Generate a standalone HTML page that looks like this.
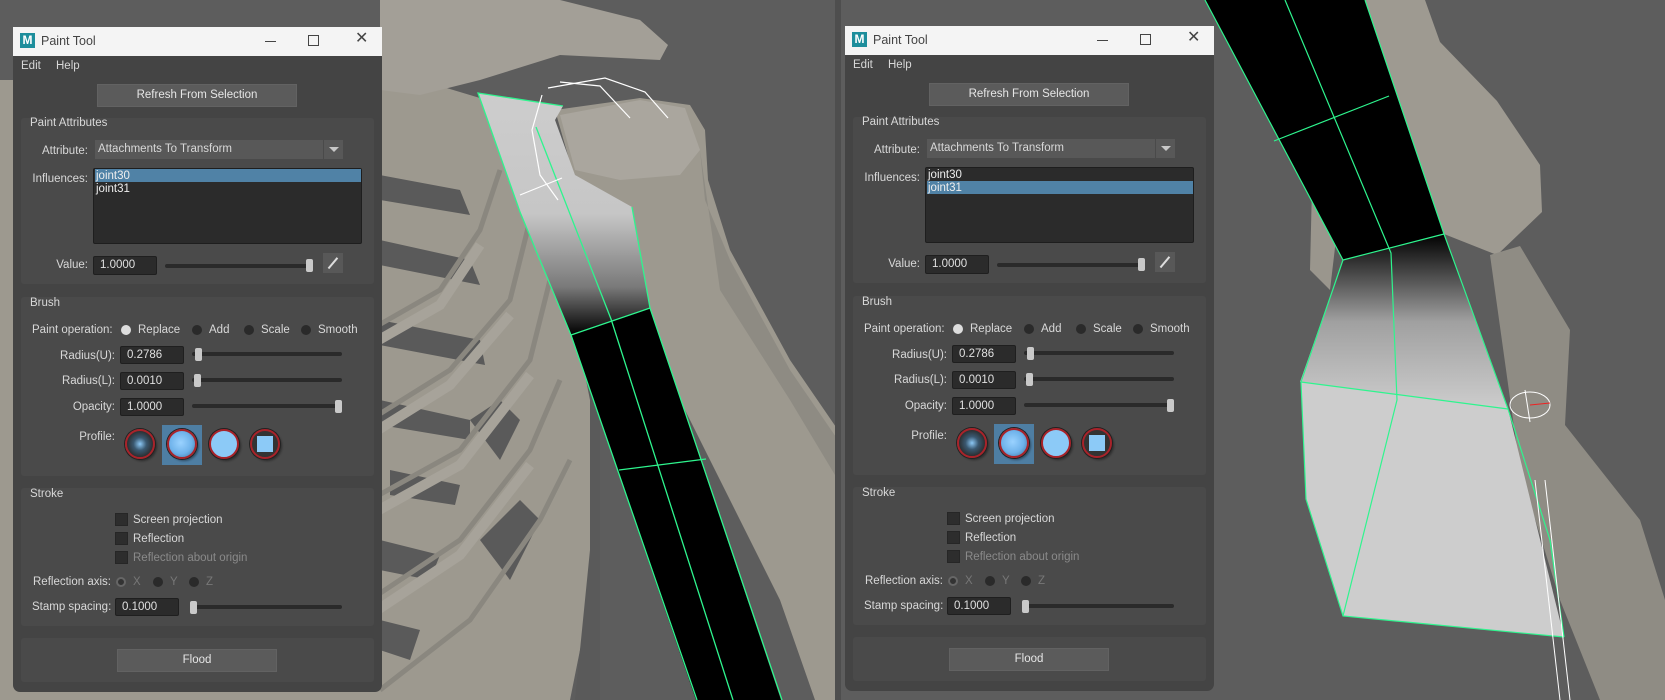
<!DOCTYPE html>
<html><head><meta charset="utf-8"><style>
*{margin:0;padding:0;box-sizing:border-box}
body{width:1665px;height:700px;overflow:hidden;background:#5c5c5c;position:relative;font-family:"Liberation Sans",sans-serif;font-size:11.5px;color:#d8d8d8}
.a{position:absolute}
.p{position:absolute;width:0;height:0}
.win{left:13px;top:27px;width:369px;height:665px;background:#444;border-radius:0 0 7px 7px}
.tb{left:13px;top:27px;width:369px;height:29px;background:#f4f4f4;color:#333;font-size:12.5px}
.sec{left:21px;width:353px;background:#4a4a4a;border-radius:3px}
.lbl{white-space:nowrap;line-height:14px}
.r{text-align:right}
.btn{background:#5b5b5b;border:1px solid #626262;color:#e6e6e6;text-align:center}
.fld{background:#2b2b2b;border:1px solid #1f1f1f;border-radius:2px;color:#e0e0e0;padding-left:6px;line-height:16px}
.trk{height:4px;background:#2a2a2a;border-radius:2px}
.hdl{width:7px;height:13px;background:#c9c9c9;border-radius:2px}
.rad{width:10px;height:10px;border-radius:50%;background:#2a2a2a}
.cb{width:13px;height:13px;background:#2d2d2d;border:1px solid #262626}
.prof{width:30px;height:30px;border-radius:50%;border:2px solid #a8232a;box-shadow:0 0 0 1px #222,2px 2px 2px rgba(0,0,0,.4)}
</style></head><body>
<svg class="a" style="left:0;top:0" width="1665" height="700">
<defs><linearGradient id="g1" x1="0" y1="0" x2="0" y2="1"><stop offset="0" stop-color="#cdcdcd"/><stop offset=".5" stop-color="#c6c6c6"/><stop offset=".8" stop-color="#7a7a7a"/><stop offset="1" stop-color="#000"/></linearGradient>
<linearGradient id="g2" x1="0" y1="0" x2="0" y2="1"><stop offset="0" stop-color="#000"/><stop offset=".5" stop-color="#a0a0a0"/><stop offset="1" stop-color="#cdcdcd"/></linearGradient></defs>
<!-- left viewport -->
<rect x="0" y="0" width="838" height="700" fill="#5d5d5d"/>
<polygon points="0,80 420,80 520,110 560,160 590,300 600,450 590,600 570,700 0,700" fill="#9d998f"/>
<g fill="#5a5a5a">
<polygon points="380,175 460,190 470,215 380,200"/>
<polygon points="380,240 470,260 480,285 380,265"/>
<polygon points="380,320 480,340 485,365 380,345"/>
<polygon points="380,400 470,420 470,440 380,425"/>
<polygon points="390,470 460,485 455,505 390,495"/>
<polygon points="380,540 440,555 430,580 380,570"/>
<polygon points="380,620 420,630 410,660 380,650"/>
<polygon points="470,420 500,400 520,420 500,460"/>
<polygon points="480,540 520,500 540,520 510,580"/>
<polygon points="560,250 600,250 600,700 575,700 590,550 590,400"/>
</g>
<g stroke="#8a877f" stroke-width="5" fill="none">
<polyline points="370,330 440,290 480,230 500,170"/>
<polyline points="370,420 450,370 510,300 530,220"/>
<polyline points="370,500 460,450 530,360 550,280"/>
<polyline points="370,600 460,540 530,450 560,380"/>
<polyline points="380,690 470,620 540,520 570,460"/>
</g>
<g stroke="#a7a39a" stroke-width="10" fill="none">
<polyline points="370,345 440,305 480,245"/>
<polyline points="370,435 450,385 510,315"/>
<polyline points="370,515 460,465 530,375"/>
<polyline points="370,615 460,555 530,465"/>
</g>
<polygon points="380,0 560,0 640,20 668,45 660,60 560,55 480,80 420,95 380,90" fill="#a39f97"/>
<polygon points="555,110 640,98 690,105 705,130 708,180 730,250 790,360 838,430 838,700 815,700 780,600 730,500 680,400 640,320 600,250 575,180" fill="#9d998f"/>
<polygon points="560,115 640,100 685,108 700,150 680,175 620,180 575,170" fill="#aaa69e"/>
<polygon points="700,150 705,200 730,260 790,370 838,440 838,480 790,400 720,290" fill="#8e8b83"/>
<polygon points="478,93 563,106 555,120 575,175 632,207 650,308 571,335 520,212" fill="url(#g1)"/>
<polygon points="571,335 650,308 781,700 696,700" fill="#000"/>
<g stroke="#2ef58e" stroke-width="1.3" fill="none">
<polyline points="563,106 478,93 520,212 571,335 697,700"/>
<polyline points="632,207 650,308 782,700"/>
<line x1="571" y1="335" x2="650" y2="308"/><line x1="619" y1="470" x2="706" y2="459"/>
<polyline points="536,127 611,319 733,700"/>
</g>
<g stroke="#fff" stroke-width="1.2" fill="none">
<polyline points="548,88 605,78 645,92 668,118"/><polyline points="560,82 600,86 630,118"/><polyline points="542,95 532,130 540,175 558,200"/><line x1="520" y1="195" x2="562" y2="178"/>
</g>
<rect x="835" y="0" width="6" height="700" fill="#4e4e4e"/>
<!-- right viewport -->
<rect x="841" y="0" width="824" height="700" fill="#5d5d5d"/>
<polygon points="1365,0 1425,0 1440,42 1497,101 1540,165 1542,212 1497,255 1444,234" fill="#9e9a91"/>
<polygon points="1490,255 1520,246 1570,330 1565,425 1640,520 1665,600 1665,700 1600,700 1560,600 1520,470" fill="#8f8c84"/>
<polygon points="1312,186 1343,180 1330,290 1310,270" fill="#9a968d"/>
<polygon points="1205,0 1365,0 1444,234 1343,260" fill="#000"/>
<polygon points="1343,260 1444,234 1508,409 1300,382" fill="url(#g2)"/>
<polygon points="1301,382 1508,409 1564,637 1343,616 1306,499" fill="#cdcdcd"/>
<g stroke="#2ef58e" stroke-width="1.2" fill="none">
<polyline points="1205,0 1343,260 1301,382 1306,499 1343,616 1564,637"/>
<polyline points="1365,0 1444,234 1508,409 1550,540 1564,637"/>
<polyline points="1285,0 1391,253 1397,400 1343,616"/>
<polyline points="1274,141 1389,96"/>
<line x1="1343" y1="260" x2="1444" y2="234"/><line x1="1301" y1="382" x2="1508" y2="409"/>
</g>
<g stroke="#fff" stroke-width="1" fill="none"><ellipse cx="1530" cy="405" rx="20" ry="13"/><line x1="1525" y1="390" x2="1530" y2="422"/><line x1="1535" y1="480" x2="1560" y2="700"/><line x1="1545" y1="480" x2="1570" y2="700"/></g>
<line x1="1530" y1="405" x2="1550" y2="403" stroke="#e22" stroke-width="1"/>
</svg>

<div class="p" style="left:0;top:0">
<div class="a win"></div>
<div class="a tb"></div>
<div class="a" style="left:20px;top:33px;width:15px;height:15px;background:#1d8e9c;color:#fff;font-weight:bold;font-size:12px;text-align:center;line-height:15px">M</div>
<div class="a lbl" style="left:41px;top:34px;color:#444;font-size:12.5px">Paint Tool</div>
<div class="a" style="left:265px;top:41px;width:11px;height:1px;background:#444"></div>
<div class="a" style="left:308px;top:35px;width:11px;height:11px;border:1px solid #444"></div>
<div class="a lbl" style="left:355px;top:32px;color:#444;font-size:16px">✕</div>
<div class="a lbl" style="left:21px;top:59px">Edit</div>
<div class="a lbl" style="left:56px;top:59px">Help</div>
<div class="a btn" style="left:97px;top:84px;width:200px;height:23px;line-height:21px">Refresh From Selection</div>
<div class="a sec" style="top:118px;height:166px"></div>
<div class="a lbl" style="left:30px;top:116px">Paint Attributes</div>
<div class="a lbl r" style="left:20px;width:68px;top:144px">Attribute:</div>
<div class="a" style="left:95px;top:140px;width:248px;height:19px;background:#585858;padding-left:3px;line-height:19px">Attachments To Transform</div>
<div class="a" style="left:323px;top:140px;width:1px;height:19px;background:#4a4a4a"></div>
<div class="a" style="left:329px;top:147px;width:0;height:0;border-left:5px solid transparent;border-right:5px solid transparent;border-top:5px solid #c8c8c8"></div>
<div class="a lbl r" style="left:20px;width:68px;top:172px">Influences:</div>
<div class="a" style="left:93px;top:168px;width:269px;height:76px;background:#2b2b2b;border:1px solid #1e1e1e;border-radius:2px"></div>
<div class="a" style="left:95px;top:169px;width:266px;height:13px;background:#5082a6"></div>
<div class="a lbl" style="left:96px;top:169px;color:#eee">joint30</div>
<div class="a lbl" style="left:96px;top:182px;color:#eee">joint31</div>
<div class="a lbl r" style="left:20px;width:68px;top:258px">Value:</div>
<div class="a fld" style="left:93px;top:256px;width:64px;height:19px">1.0000</div>
<div class="a trk" style="left:165px;top:264px;width:148px"></div>
<div class="a hdl" style="left:306px;top:259px"></div>
<div class="a" style="left:323px;top:253px;width:20px;height:20px;background:#585858"></div>
<div class="a" style="left:332px;top:256px;width:1.5px;height:14px;background:#ddd;transform:rotate(40deg)"></div>
<div class="a sec" style="top:297px;height:179px"></div>
<div class="a lbl" style="left:30px;top:296px">Brush</div>
<div class="a lbl" style="left:32px;top:323px">Paint operation:</div>
<div class="a rad" style="left:121px;top:325px;background:#ddd"></div>
<div class="a lbl" style="left:138px;top:323px">Replace</div>
<div class="a rad" style="left:192px;top:325px"></div>
<div class="a lbl" style="left:209px;top:323px">Add</div>
<div class="a rad" style="left:244px;top:325px"></div>
<div class="a lbl" style="left:261px;top:323px">Scale</div>
<div class="a rad" style="left:301px;top:325px"></div>
<div class="a lbl" style="left:318px;top:323px">Smooth</div>
<div class="a lbl r" style="left:30px;width:85px;top:349px">Radius(U):</div>
<div class="a fld" style="left:120px;top:346px;width:64px;height:18px">0.2786</div>
<div class="a trk" style="left:192px;top:352px;width:150px"></div>
<div class="a hdl" style="left:195px;top:348px"></div>
<div class="a lbl r" style="left:30px;width:85px;top:374px">Radius(L):</div>
<div class="a fld" style="left:120px;top:372px;width:64px;height:18px">0.0010</div>
<div class="a trk" style="left:192px;top:378px;width:150px"></div>
<div class="a hdl" style="left:194px;top:374px"></div>
<div class="a lbl r" style="left:30px;width:85px;top:400px">Opacity:</div>
<div class="a fld" style="left:120px;top:398px;width:64px;height:18px">1.0000</div>
<div class="a trk" style="left:192px;top:404px;width:150px"></div>
<div class="a hdl" style="left:335px;top:400px"></div>
<div class="a lbl r" style="left:30px;width:85px;top:430px">Profile:</div>
<div class="a" style="left:162px;top:425px;width:40px;height:40px;background:#4e7ea3"></div>
<div class="a prof" style="left:125px;top:429px;background:radial-gradient(circle,#8cc8f5 0,#3a5870 35%,#2a2a2a 75%)"></div>
<div class="a prof" style="left:167px;top:429px;background:radial-gradient(circle at 45% 45%,#9ad2ff 0,#6eb2ea 55%,#3a6c96 100%)"></div>
<div class="a prof" style="left:209px;top:429px;background:#8ccaf7"></div>
<div class="a prof" style="left:250px;top:429px;background:#333"></div>
<div class="a" style="left:257px;top:436px;width:16px;height:16px;background:#8ccaf7"></div>
<div class="a sec" style="top:488px;height:138px"></div>
<div class="a lbl" style="left:30px;top:487px">Stroke</div>
<div class="a cb" style="left:115px;top:513px"></div>
<div class="a lbl" style="left:133px;top:513px">Screen projection</div>
<div class="a cb" style="left:115px;top:532px"></div>
<div class="a lbl" style="left:133px;top:532px">Reflection</div>
<div class="a cb" style="left:115px;top:551px"></div>
<div class="a lbl" style="left:133px;top:551px;color:#8a8a8a">Reflection about origin</div>
<div class="a lbl" style="left:33px;top:575px">Reflection axis:</div>
<div class="a rad" style="left:116px;top:577px;border:2px solid #666;background:#333"></div>
<div class="a lbl" style="left:133px;top:575px;color:#777">X</div>
<div class="a rad" style="left:153px;top:577px"></div>
<div class="a lbl" style="left:170px;top:575px;color:#777">Y</div>
<div class="a rad" style="left:189px;top:577px"></div>
<div class="a lbl" style="left:206px;top:575px;color:#777">Z</div>
<div class="a lbl" style="left:32px;top:600px">Stamp spacing:</div>
<div class="a fld" style="left:115px;top:598px;width:64px;height:18px">0.1000</div>
<div class="a trk" style="left:193px;top:605px;width:149px"></div>
<div class="a hdl" style="left:190px;top:601px"></div>
<div class="a sec" style="top:638px;height:44px"></div>
<div class="a btn" style="left:117px;top:649px;width:160px;height:23px;line-height:21px">Flood</div>
</div>

<div class="p" style="left:832px;top:-1px">
<div class="a win"></div>
<div class="a tb"></div>
<div class="a" style="left:20px;top:33px;width:15px;height:15px;background:#1d8e9c;color:#fff;font-weight:bold;font-size:12px;text-align:center;line-height:15px">M</div>
<div class="a lbl" style="left:41px;top:34px;color:#444;font-size:12.5px">Paint Tool</div>
<div class="a" style="left:265px;top:41px;width:11px;height:1px;background:#444"></div>
<div class="a" style="left:308px;top:35px;width:11px;height:11px;border:1px solid #444"></div>
<div class="a lbl" style="left:355px;top:32px;color:#444;font-size:16px">✕</div>
<div class="a lbl" style="left:21px;top:59px">Edit</div>
<div class="a lbl" style="left:56px;top:59px">Help</div>
<div class="a btn" style="left:97px;top:84px;width:200px;height:23px;line-height:21px">Refresh From Selection</div>
<div class="a sec" style="top:118px;height:166px"></div>
<div class="a lbl" style="left:30px;top:116px">Paint Attributes</div>
<div class="a lbl r" style="left:20px;width:68px;top:144px">Attribute:</div>
<div class="a" style="left:95px;top:140px;width:248px;height:19px;background:#585858;padding-left:3px;line-height:19px">Attachments To Transform</div>
<div class="a" style="left:323px;top:140px;width:1px;height:19px;background:#4a4a4a"></div>
<div class="a" style="left:329px;top:147px;width:0;height:0;border-left:5px solid transparent;border-right:5px solid transparent;border-top:5px solid #c8c8c8"></div>
<div class="a lbl r" style="left:20px;width:68px;top:172px">Influences:</div>
<div class="a" style="left:93px;top:168px;width:269px;height:76px;background:#2b2b2b;border:1px solid #1e1e1e;border-radius:2px"></div>
<div class="a" style="left:95px;top:182px;width:266px;height:13px;background:#5082a6"></div>
<div class="a lbl" style="left:96px;top:169px;color:#eee">joint30</div>
<div class="a lbl" style="left:96px;top:182px;color:#eee">joint31</div>
<div class="a lbl r" style="left:20px;width:68px;top:258px">Value:</div>
<div class="a fld" style="left:93px;top:256px;width:64px;height:19px">1.0000</div>
<div class="a trk" style="left:165px;top:264px;width:148px"></div>
<div class="a hdl" style="left:306px;top:259px"></div>
<div class="a" style="left:323px;top:253px;width:20px;height:20px;background:#585858"></div>
<div class="a" style="left:332px;top:256px;width:1.5px;height:14px;background:#ddd;transform:rotate(40deg)"></div>
<div class="a sec" style="top:297px;height:179px"></div>
<div class="a lbl" style="left:30px;top:296px">Brush</div>
<div class="a lbl" style="left:32px;top:323px">Paint operation:</div>
<div class="a rad" style="left:121px;top:325px;background:#ddd"></div>
<div class="a lbl" style="left:138px;top:323px">Replace</div>
<div class="a rad" style="left:192px;top:325px"></div>
<div class="a lbl" style="left:209px;top:323px">Add</div>
<div class="a rad" style="left:244px;top:325px"></div>
<div class="a lbl" style="left:261px;top:323px">Scale</div>
<div class="a rad" style="left:301px;top:325px"></div>
<div class="a lbl" style="left:318px;top:323px">Smooth</div>
<div class="a lbl r" style="left:30px;width:85px;top:349px">Radius(U):</div>
<div class="a fld" style="left:120px;top:346px;width:64px;height:18px">0.2786</div>
<div class="a trk" style="left:192px;top:352px;width:150px"></div>
<div class="a hdl" style="left:195px;top:348px"></div>
<div class="a lbl r" style="left:30px;width:85px;top:374px">Radius(L):</div>
<div class="a fld" style="left:120px;top:372px;width:64px;height:18px">0.0010</div>
<div class="a trk" style="left:192px;top:378px;width:150px"></div>
<div class="a hdl" style="left:194px;top:374px"></div>
<div class="a lbl r" style="left:30px;width:85px;top:400px">Opacity:</div>
<div class="a fld" style="left:120px;top:398px;width:64px;height:18px">1.0000</div>
<div class="a trk" style="left:192px;top:404px;width:150px"></div>
<div class="a hdl" style="left:335px;top:400px"></div>
<div class="a lbl r" style="left:30px;width:85px;top:430px">Profile:</div>
<div class="a" style="left:162px;top:425px;width:40px;height:40px;background:#4e7ea3"></div>
<div class="a prof" style="left:125px;top:429px;background:radial-gradient(circle,#8cc8f5 0,#3a5870 35%,#2a2a2a 75%)"></div>
<div class="a prof" style="left:167px;top:429px;background:radial-gradient(circle at 45% 45%,#9ad2ff 0,#6eb2ea 55%,#3a6c96 100%)"></div>
<div class="a prof" style="left:209px;top:429px;background:#8ccaf7"></div>
<div class="a prof" style="left:250px;top:429px;background:#333"></div>
<div class="a" style="left:257px;top:436px;width:16px;height:16px;background:#8ccaf7"></div>
<div class="a sec" style="top:488px;height:138px"></div>
<div class="a lbl" style="left:30px;top:487px">Stroke</div>
<div class="a cb" style="left:115px;top:513px"></div>
<div class="a lbl" style="left:133px;top:513px">Screen projection</div>
<div class="a cb" style="left:115px;top:532px"></div>
<div class="a lbl" style="left:133px;top:532px">Reflection</div>
<div class="a cb" style="left:115px;top:551px"></div>
<div class="a lbl" style="left:133px;top:551px;color:#8a8a8a">Reflection about origin</div>
<div class="a lbl" style="left:33px;top:575px">Reflection axis:</div>
<div class="a rad" style="left:116px;top:577px;border:2px solid #666;background:#333"></div>
<div class="a lbl" style="left:133px;top:575px;color:#777">X</div>
<div class="a rad" style="left:153px;top:577px"></div>
<div class="a lbl" style="left:170px;top:575px;color:#777">Y</div>
<div class="a rad" style="left:189px;top:577px"></div>
<div class="a lbl" style="left:206px;top:575px;color:#777">Z</div>
<div class="a lbl" style="left:32px;top:600px">Stamp spacing:</div>
<div class="a fld" style="left:115px;top:598px;width:64px;height:18px">0.1000</div>
<div class="a trk" style="left:193px;top:605px;width:149px"></div>
<div class="a hdl" style="left:190px;top:601px"></div>
<div class="a sec" style="top:638px;height:44px"></div>
<div class="a btn" style="left:117px;top:649px;width:160px;height:23px;line-height:21px">Flood</div>
</div>
</body></html>
